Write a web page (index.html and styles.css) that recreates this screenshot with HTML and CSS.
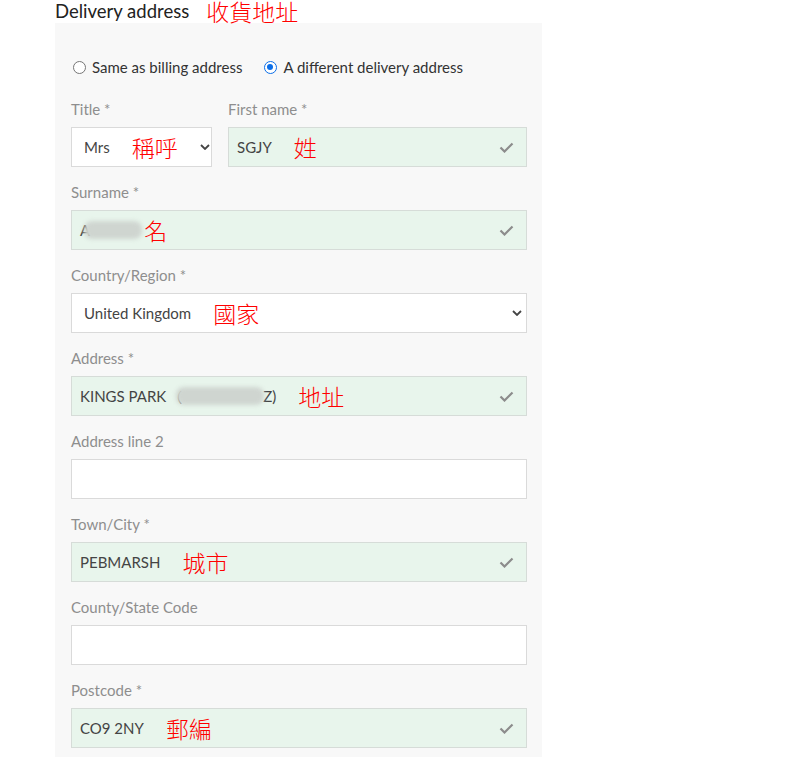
FILE: index.html
```html
<!DOCTYPE html>
<html lang="en">
<head>
    <meta charset="UTF-8">
    <title>Delivery address</title>
    <link rel="stylesheet" href="styles.css">
</head>
<body>
<div class="page">
    <!-- 标题 -->
    <h2 class="title">Delivery address <span class="note">收貨地址</span></h2>

    <div class="panel">
        <!-- 地址选择 -->
        <div class="radios">
            <label class="radio"><span class="dot"></span>Same as billing address</label>
            <label class="radio"><span class="dot on"></span>A different delivery address</label>
        </div>

        <div class="row">
            <div class="group">
                <div class="label">Title *</div>
                <div class="field select">
                    <span class="val">Mrs</span><span class="note">稱呼</span>
                    <svg class="arrow" width="10" height="6" viewBox="0 0 10 6"><path d="M1 1l4 4 4-4" fill="none" stroke="#444" stroke-width="1.8"/></svg>
                </div>
            </div>
            <div class="group">
                <div class="label">First name *</div>
                <div class="field ok">
                    <span class="val">SGJY</span><span class="note">姓</span>
                    <svg class="check" width="15" height="11" viewBox="0 0 15 11"><path d="M1.5 5.5l4 4 8-8" fill="none" stroke="#8c8c8c" stroke-width="2.2"/></svg>
                </div>
            </div>
        </div>

        <div class="group">
            <div class="label">Surname *</div>
            <div class="field ok">
                <span class="val">A<span class="blur b1"></span></span><span class="note tight">名</span>
                <svg class="check" width="15" height="11" viewBox="0 0 15 11"><path d="M1.5 5.5l4 4 8-8" fill="none" stroke="#8c8c8c" stroke-width="2.2"/></svg>
            </div>
        </div>

        <div class="group">
            <div class="label">Country/Region *</div>
            <div class="field select">
                <span class="val">United Kingdom</span><span class="note">國家</span>
                <svg class="arrow" width="10" height="6" viewBox="0 0 10 6"><path d="M1 1l4 4 4-4" fill="none" stroke="#444" stroke-width="1.8"/></svg>
            </div>
        </div>

        <div class="group">
            <div class="label">Address *</div>
            <div class="field ok">
                <span class="val">KINGS PARK<span class="paren">（</span><span class="blur b2"></span>Z)</span><span class="note">地址</span>
                <svg class="check" width="15" height="11" viewBox="0 0 15 11"><path d="M1.5 5.5l4 4 8-8" fill="none" stroke="#8c8c8c" stroke-width="2.2"/></svg>
            </div>
        </div>

        <div class="group">
            <div class="label">Address line 2</div>
            <div class="field"></div>
        </div>

        <div class="group">
            <div class="label">Town/City *</div>
            <div class="field ok">
                <span class="val">PEBMARSH</span><span class="note">城市</span>
                <svg class="check" width="15" height="11" viewBox="0 0 15 11"><path d="M1.5 5.5l4 4 8-8" fill="none" stroke="#8c8c8c" stroke-width="2.2"/></svg>
            </div>
        </div>

        <div class="group">
            <div class="label">County/State Code</div>
            <div class="field"></div>
        </div>

        <div class="group">
            <div class="label">Postcode *</div>
            <div class="field ok">
                <span class="val">CO9 2NY</span><span class="note">郵編</span>
                <svg class="check" width="15" height="11" viewBox="0 0 15 11"><path d="M1.5 5.5l4 4 8-8" fill="none" stroke="#8c8c8c" stroke-width="2.2"/></svg>
            </div>
        </div>
    </div>
</div>
</body>
</html>
```

FILE: styles.css
```css
*{
    margin: 0;
    padding: 0;
    box-sizing: border-box;
}
body{
    background: #fff;
    font-family: Lato, "Noto Sans", "Noto Sans CJK TC", sans-serif;
    color: #333;
}
.page{
    width: 487px;
    margin-left: 55px;
}
/*标题*/
.title{
    height: 23px;
    font-size: 18.5px;
    font-weight: normal;
    line-height: 23px;
    color: #222;
    display: flex;
    align-items: center;
}
.note{
    font-family: "Noto Sans CJK TC", sans-serif;
    font-size: 23px;
    font-weight: 300;
    color: #f00;
    line-height: 1;
    white-space: nowrap;
    flex-shrink: 0;
}
.title .note{
    margin-left: 17px;
}
/*灰色面板*/
.panel{
    background: #f8f8f8;
    padding: 34px 15px 40px 16px;
}
.radios{
    display: flex;
    gap: 20px;
    height: 20px;
    align-items: center;
    margin-bottom: 22px;
    font-size: 15px;
    color: #333;
}
.radio{
    display: flex;
    align-items: center;
}
.radio .dot{
    width: 13px;
    height: 13px;
    border: 1px solid #767676;
    border-radius: 50%;
    margin: 0 6px 0 2px;
    background: #fff;
    position: relative;
}
.radio .dot.on{
    border: 1.5px solid #0b6ee8;
}
.radio .dot.on::after{
    content: "";
    position: absolute;
    left: 2px;
    top: 2px;
    width: 6px;
    height: 6px;
    border-radius: 50%;
    background: #0b6ee8;
}
/*表单行*/
.row{
    display: grid;
    grid-template-columns: 141px 1fr;
    gap: 16px;
}
.group{
    margin-bottom: 15px;
}
.label{
    height: 20px;
    line-height: 20px;
    font-size: 15px;
    color: #8e8e8e;
    margin-bottom: 8px;
}
.field{
    height: 40px;
    border: 1px solid #dadada;
    background: #fff;
    display: flex;
    align-items: center;
    gap: 22px;
    padding: 0 12px 0 8px;
    font-size: 15px;
    color: #444;
}
.field.ok{
    background: #e8f5ec;
    border-color: #d6dcd8;
}
.field.select{
    padding-left: 12px;
    padding-right: 4px;
}
.field .val{
    display: flex;
    align-items: center;
    white-space: nowrap;
    flex-shrink: 0;
}
.field .note.tight{
    margin-left: -20px;
}
.field .check,
.field .arrow{
    margin-left: auto;
    flex-shrink: 0;
}
.paren{
    font-family: "Noto Sans CJK TC", sans-serif;
    font-size: 14px;
    margin-left: 2px;
}
/*模糊遮挡*/
.blur{
    display: inline-block;
    height: 18px;
    background: #cfd5d0;
    border-radius: 8px;
    filter: blur(2px);
}
.b1{
    width: 58px;
    margin-left: -6px;
}
.b2{
    width: 88px;
    margin: 0 -1px 0 -6px;
}
```
